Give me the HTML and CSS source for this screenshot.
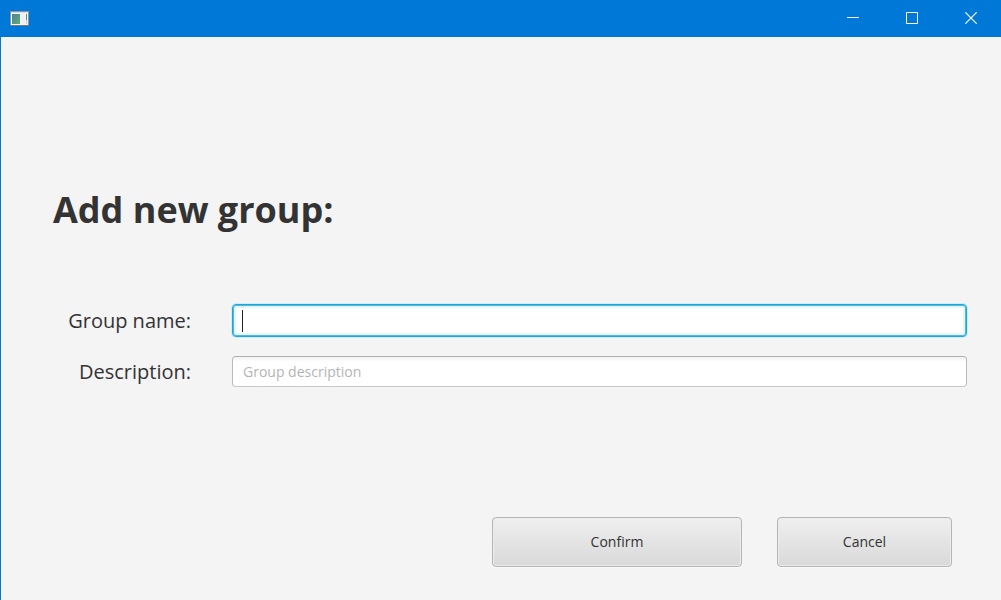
FILE: index.html
```html
<!DOCTYPE html>
<html lang="en">
<head>
<meta charset="utf-8">
<meta name="viewport" content="width=device-width, initial-scale=1">
<title>Add new group</title>
<link rel="stylesheet" href="styles.css">
</head>
<body>
<div class="window">
  <header class="titlebar">
    <svg class="app-icon" width="20" height="16" viewBox="0 0 20 16" aria-hidden="true">
      <defs><linearGradient id="pane" x1="0" y1="0" x2="1" y2="1"><stop offset="0" stop-color="#4a829c"/><stop offset="1" stop-color="#5fae74"/></linearGradient></defs>
      <rect x=".5" y=".5" width="18" height="14" fill="#f5f5f5" stroke="#8d979f"/>
      <path d="M1 1.500h17" stroke="#d9dcdf"/>
      <path d="M0 14.500h19" stroke="#74797e"/>
      <rect x="2" y="3" width="8" height="10" fill="url(#pane)"/>
      <rect x="11" y="3" width="4" height="10" fill="#eef0f1"/>
      <rect x="16" y="3" width="1" height="6" fill="#4d9a83"/>
      <rect x="16" y="9" width="1" height="4" fill="#c6cdd0"/>
    </svg>
    <div class="window-controls">
      <button class="window-button" type="button" aria-label="Minimize"><svg width="12" height="12" viewBox="0 0 12 12"><path d="M0 5.500h12" fill="none" stroke="#fff"/></svg></button>
      <button class="window-button" type="button" aria-label="Maximize"><svg width="12" height="12" viewBox="0 0 12 12"><path d="M.5.5h11v11H.5z" fill="none" stroke="#fff"/></svg></button>
      <button class="window-button" type="button" aria-label="Close"><svg width="12" height="12" viewBox="0 0 12 12"><path d="M.3.3l11.400 11.400M11.700.3L.3 11.700" fill="none" stroke="#fff" stroke-width="1.200"/></svg></button>
    </div>
  </header>
  <main class="content">
    <h1 class="heading">Add new group:</h1>
    <form class="group-form">
      <div class="fields">
        <label class="label" for="group-name">Group name:</label>
        <div class="field">
          <input class="input input-focused" id="group-name" type="text">
          <span class="caret" aria-hidden="true"></span>
        </div>
        <label class="label" for="description">Description:</label>
        <div class="field">
          <input class="input" id="description" type="text" placeholder="Group description">
        </div>
      </div>
      <div class="actions">
        <button class="button button-confirm" type="submit">Confirm</button>
        <button class="button button-cancel" type="button">Cancel</button>
      </div>
    </form>
  </main>
</div>
</body>
</html>
```
FILE: styles.css
```css
* {
  box-sizing: border-box;
}

body {
  margin: 0;
  background: #f4f4f4;
  color: #333;
  font-family: "Segoe UI", "Open Sans", sans-serif;
}

.window {
  display: flex;
  flex-direction: column;
  min-height: 100vh;
  border-left: 1px solid #0078d7;
}

.titlebar {
  display: flex;
  align-items: center;
  justify-content: space-between;
  height: 37px;
  padding-left: 9px;
  background: #0078d7;
}

.window-controls {
  display: flex;
  align-self: stretch;
  padding: 0 1px 1px 0;
}

.window-button {
  display: flex;
  align-items: center;
  justify-content: center;
  width: 59px;
  padding: 0;
  border: 0;
  background: transparent;
}

.content {
  flex: 1;
  padding: 145px 34px 33px 52px;
}

.heading {
  margin: 0;
  font-size: 36px;
  line-height: 56px;
  font-weight: 700;
}

.fields {
  display: grid;
  grid-template-columns: 138px 1fr;
  column-gap: 41px;
  row-gap: 19px;
  align-items: center;
  margin-top: 66px;
}

.label {
  font-size: 20px;
  line-height: 31px;
  text-align: right;
}

.field {
  position: relative;
}

.input {
  display: block;
  width: 100%;
  height: 31px;
  padding: 0 10px;
  border: 1px solid #bababa;
  border-top-color: #b0b0b0;
  border-bottom-color: #c8c8c8;
  border-radius: 4px;
  outline: 0;
  background: linear-gradient(#f3f3f3, #fff 5px);
  color: #333;
  font: 14px/20px "Segoe UI", "Open Sans", sans-serif;
}

.input::placeholder {
  color: #b4b4b4;
  opacity: 1;
}

.input-focused {
  height: 33px;
  border-color: #1ea8d8;
  background: #fff;
  box-shadow: 0 0 0 1px #d3ebf4, inset 0 0 0 1px #4fb9df, inset 0 0 0 3px #e6f5fa;
}

.caret {
  position: absolute;
  top: 6px;
  left: 10px;
  width: 1px;
  height: 22px;
  background: #222;
}

.actions {
  display: flex;
  justify-content: flex-end;
  gap: 35px;
  margin-top: 130px;
  padding-right: 15px;
}

.button {
  height: 50px;
  border: 1px solid #b5b5b5;
  border-radius: 4px;
  background: linear-gradient(#efefef, #d9d9d9);
  box-shadow: inset 0 0 0 1px #ececec, 0 1px 0 #fafafa;
  color: #333;
  font: 14px/20px "Segoe UI", "Open Sans", sans-serif;
}

.button-confirm {
  width: 250px;
}

.button-cancel {
  width: 175px;
}
```
